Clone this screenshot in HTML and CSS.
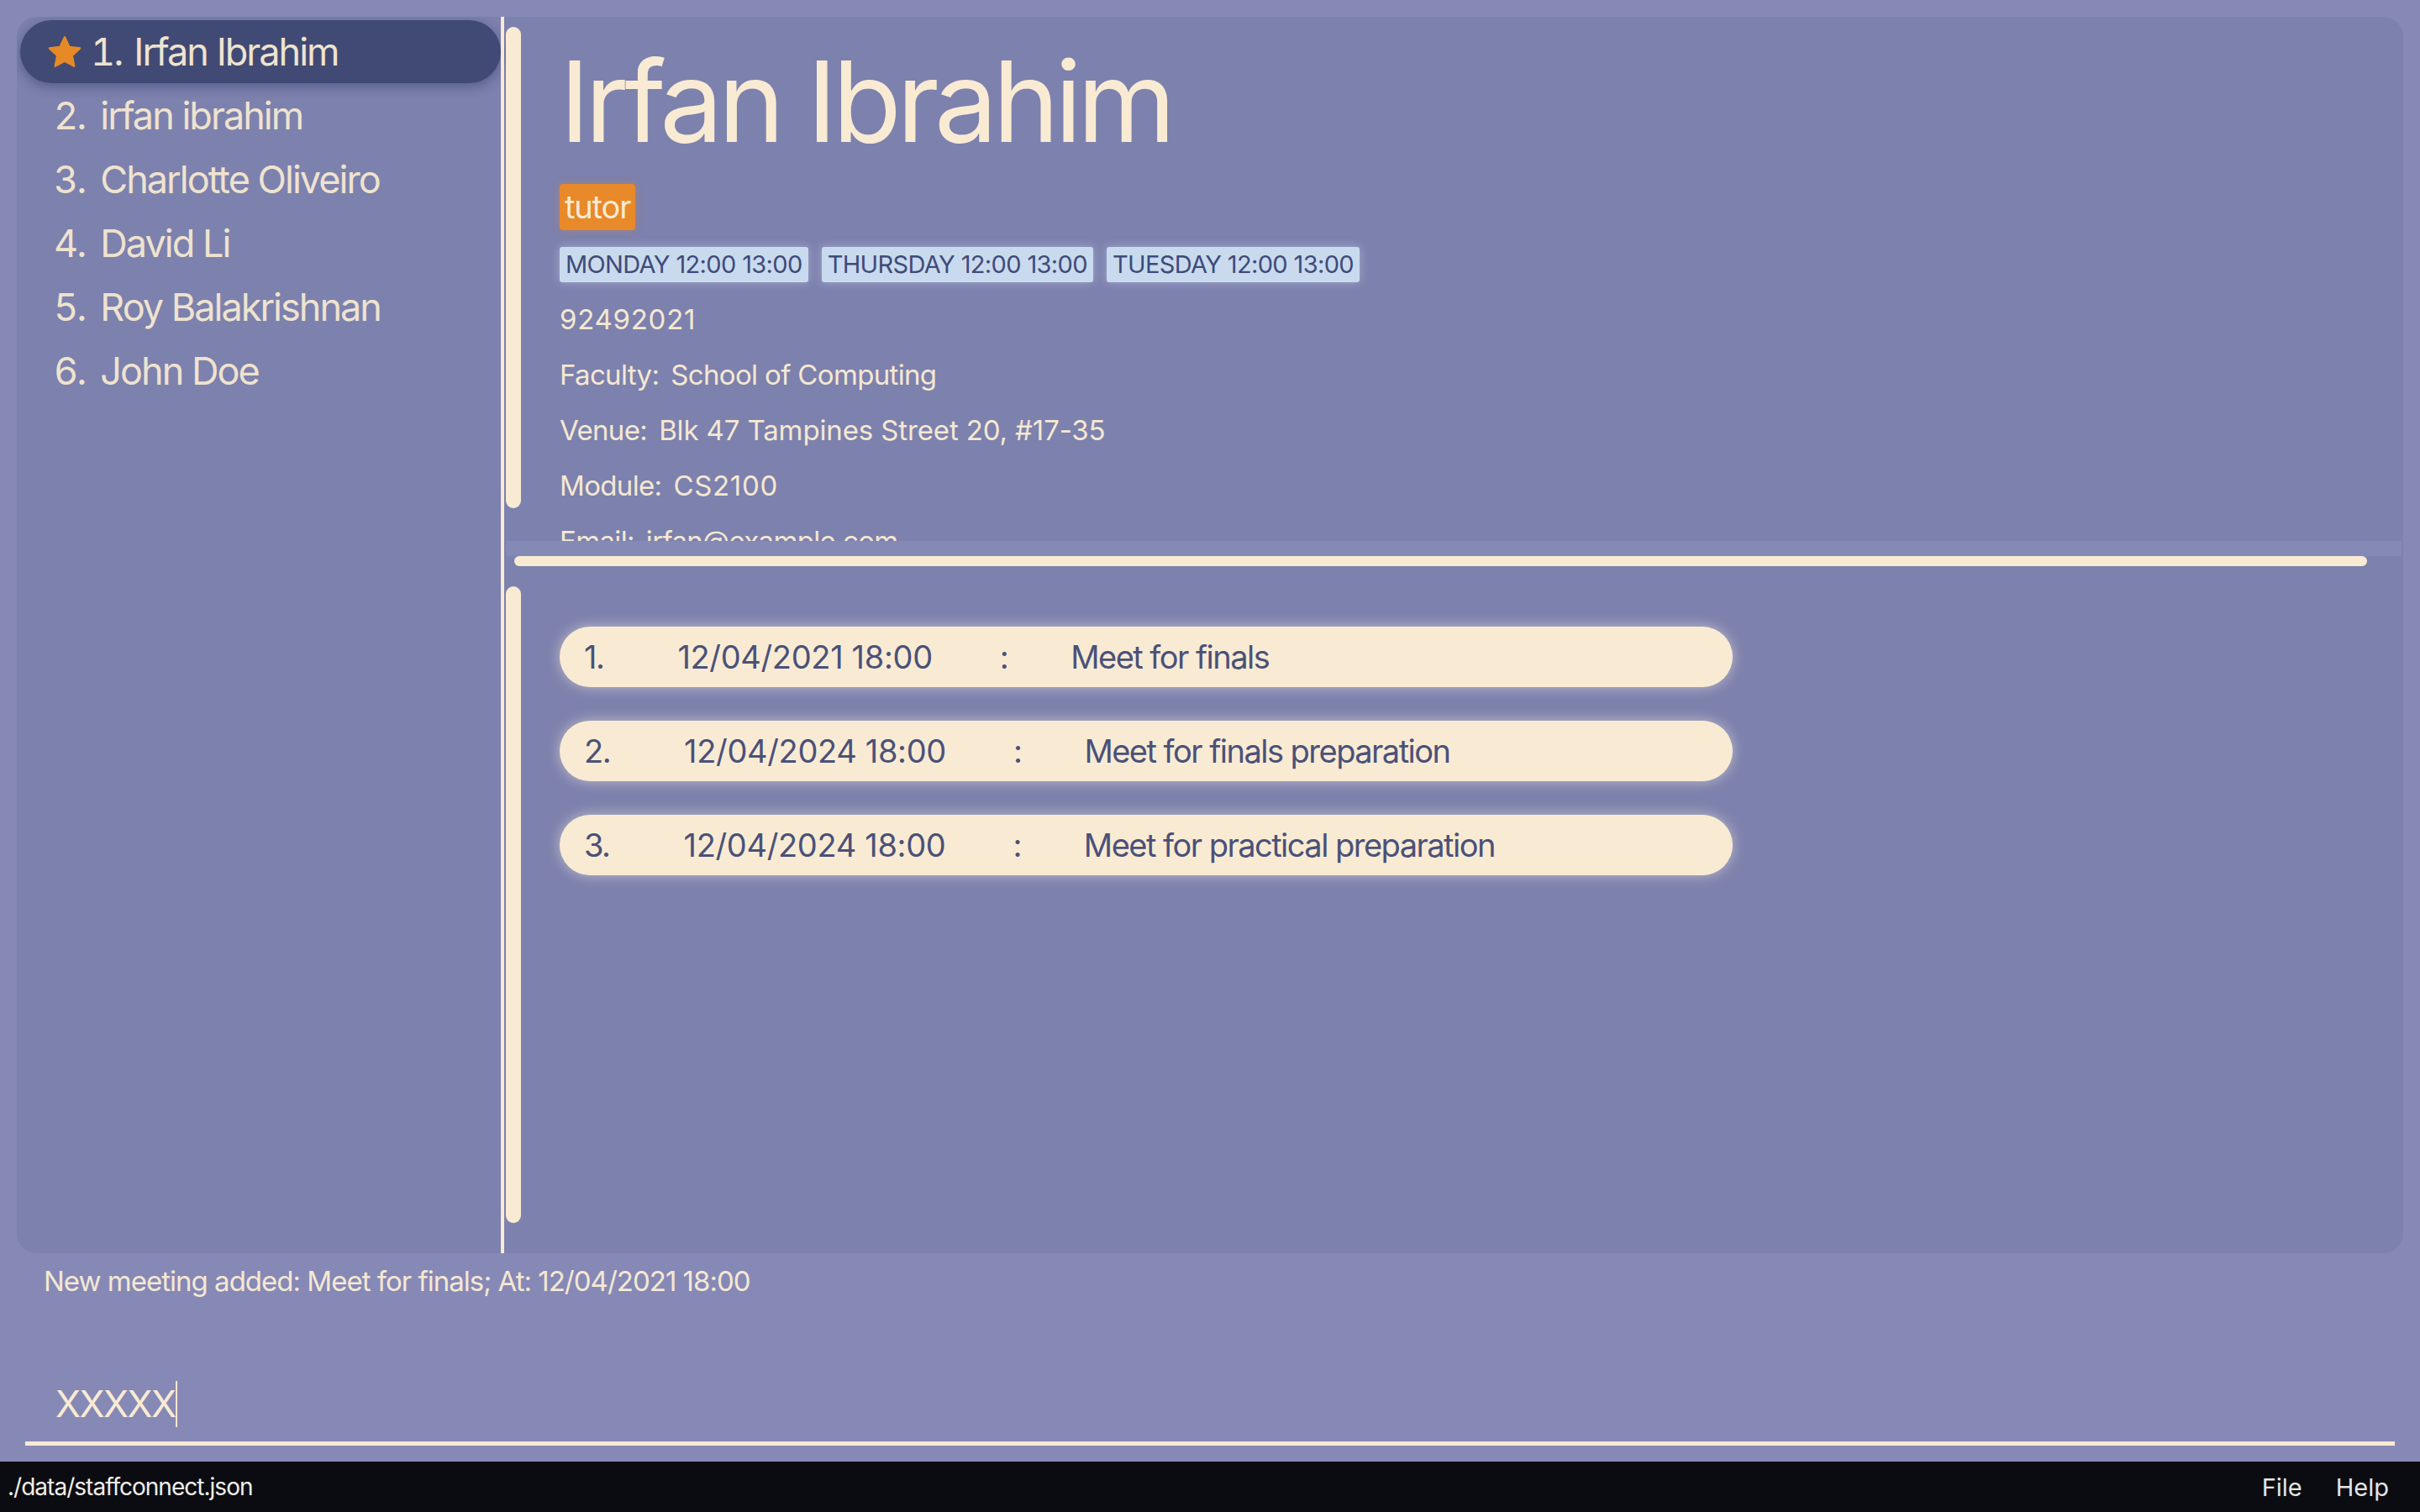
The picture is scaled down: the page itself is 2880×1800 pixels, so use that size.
FILE: index.html
```html
<!DOCTYPE html>
<html>
<head>
<meta charset="utf-8">
<link rel="stylesheet" href="styles.css">
</head>
<body>
<div class="app">
  <div class="main">
    <div class="list">
      <div class="row selected">
        <svg class="star" viewBox="0 0 24 24"><polygon points="12,1.3 15.29,8.27 22.94,9.25 17.33,14.53 18.76,22.1 12,18.4 5.24,22.1 6.67,14.53 1.06,9.25 8.71,8.27" fill="#e58a27" stroke="#e58a27" stroke-width="1.4" stroke-linejoin="round"/></svg>
        <span class="num">1.</span><span class="name">Irfan Ibrahim</span>
      </div>
      <div class="row"><span class="num">2.</span><span class="name">irfan ibrahim</span></div>
      <div class="row"><span class="num">3.</span><span class="name">Charlotte Oliveiro</span></div>
      <div class="row"><span class="num">4.</span><span class="name">David Li</span></div>
      <div class="row"><span class="num">5.</span><span class="name">Roy Balakrishnan</span></div>
      <div class="row"><span class="num">6.</span><span class="name">John Doe</span></div>
    </div>
    <div class="divider"></div>
    <div class="right">
      <div class="detail">
        <div class="vtrack"><div class="vthumb detail-thumb"></div></div>
        <div class="detail-content">
          <div class="person-name">Irfan Ibrahim</div>
          <div class="tags"><span class="tag">tutor</span></div>
          <div class="avails">
            <span class="avail">MONDAY 12:00 13:00</span>
            <span class="avail">THURSDAY 12:00 13:00</span>
            <span class="avail">TUESDAY 12:00 13:00</span>
          </div>
          <div class="field"><span class="phone">92492021</span></div>
          <div class="field"><span class="label">Faculty:</span>School of Computing</div>
          <div class="field"><span class="label">Venue:</span><span class="venue">Blk 47 Tampines Street 20, #17-35</span></div>
          <div class="field"><span class="label">Module:</span><span class="code">CS2100</span></div>
          <div class="field"><span class="label">Email:</span>irfan@example.com</div>
        </div>
      </div>
      <div class="hband"></div>
      <div class="hscroll"><div class="hthumb"></div></div>
      <div class="meetings">
        <div class="vtrack"><div class="vthumb meet-thumb"></div></div>
        <div class="meeting-list">
          <div class="card"><span class="m-num">1.</span><span class="m-date">12/04/2021 18:00</span><span class="m-colon">:</span><span class="m-desc">Meet for finals</span></div>
          <div class="card"><span class="m-num">2.</span><span class="m-date">12/04/2024 18:00</span><span class="m-colon">:</span><span class="m-desc">Meet for finals preparation</span></div>
          <div class="card"><span class="m-num">3.</span><span class="m-date">12/04/2024 18:00</span><span class="m-colon">:</span><span class="m-desc">Meet for practical preparation</span></div>
        </div>
      </div>
    </div>
  </div>
  <div class="result">New meeting added: Meet for finals; At: 12/04/2021 18:00</div>
  <div class="command"><span class="cmd-text">XXXXX</span><span class="caret"></span></div>
  <div class="status">
    <span class="path">./data/staffconnect.json</span>
    <span class="menu"><span>File</span><span>Help</span></span>
  </div>
</div>
</body>
</html>
```
FILE: styles.css
```css
* { box-sizing: border-box; }
html, body { margin: 0; padding: 0; }
body {
  width: 2880px;
  height: 1800px;
  background: #8689b6;
  font-family: Inter, "Noto Sans", sans-serif;
  color: #f3e6d0;
  overflow: hidden;
}
.app {
  display: flex;
  flex-direction: column;
  height: 1800px;
}
.main {
  margin: 20px 20px 0 20px;
  height: 1472px;
  background: #7d81ad;
  border-radius: 24px;
  display: flex;
  overflow: hidden;
}
.list {
  width: 576px;
  padding: 4px 0 0 4px;
  display: flex;
  flex-direction: column;
  gap: 1px;
}
.row {
  height: 75px;
  display: flex;
  align-items: center;
  padding-left: 40px;
  font-size: 45px;
  line-height: 75px;
  letter-spacing: -0.044em;
  color: #efe3cf;
}
.row.selected {
  background: #414a74;
  border-radius: 38px;
  padding-left: 33px;
  box-shadow: 0 4px 14px rgba(40, 45, 90, 0.45);
}
.star {
  width: 40px;
  height: 40px;
  margin-right: 11px;
  overflow: visible;
}
.num {
  margin-right: 18px;
  font-variant-numeric: tabular-nums;
}
.row.selected .num { margin-right: 14px; }
.divider {
  width: 4px;
  background: #f9ebd3;
}
.right {
  flex: 1;
  display: flex;
  flex-direction: column;
}
.vtrack {
  width: 24px;
  flex: none;
  padding-left: 2px;
}
.vthumb {
  width: 18px;
  background: #f9ebd3;
  border-radius: 9px;
}
.detail {
  height: 624px;
  display: flex;
  overflow: hidden;
}
.detail-thumb {
  margin-top: 12px;
  height: 573px;
}
.detail-content {
  padding: 19px 0 0 42px;
  color: #f5e8d2;
}
.person-name {
  font-size: 134px;
  line-height: normal;
  letter-spacing: -0.042em;
  color: #f9ebd3;
  margin-left: 0;
}
.tags {
  margin-top: 18px;
  display: flex;
}
.tag {
  background: #e8892a;
  color: #f9ebd3;
  font-size: 38px;
  line-height: 47px;
  padding: 4px 6px 4px 6px;
  border-radius: 4px;
  letter-spacing: -0.03em;
  box-shadow: 0 0 10px rgba(232, 137, 42, 0.35);
}
.avails {
  margin-top: 20px;
  display: flex;
  gap: 16px;
}
.avail {
  background: #c9daef;
  color: #3f4b78;
  font-size: 29px;
  line-height: 36px;
  padding: 3px 7px;
  border-radius: 3px;
  letter-spacing: -0.022em;
  box-shadow: 0 0 12px rgba(210, 225, 245, 0.45);
}
.avails + .field { margin-top: 11px; }
.field {
  font-size: 33px;
  line-height: 66px;
  letter-spacing: -0.02em;
  white-space: nowrap;
}
.phone { letter-spacing: 0.022em; }
.venue { letter-spacing: -0.004em; }
.code { letter-spacing: 0.02em; }
.label { margin-right: 14px; }
.hband {
  height: 18px;
  margin-left: 2px;
  margin-right: 2px;
  background: #8589b6;
}
.hscroll {
  height: 12px;
  padding-left: 12px;
}
.hthumb {
  width: 2205px;
  height: 12px;
  background: #f9ebd3;
  border-radius: 6px;
}
.meetings {
  flex: 1;
  display: flex;
}
.meet-thumb {
  margin-top: 24px;
  height: 758px;
}
.meeting-list {
  padding: 72px 0 0 42px;
  display: flex;
  flex-direction: column;
  gap: 40px;
}
.card {
  width: 1396px;
  height: 72px;
  border-radius: 36px;
  background: #f9ebd3;
  color: #4a5179;
  display: flex;
  align-items: center;
  padding-left: 29px;
  font-size: 38px;
  letter-spacing: -0.04em;
  box-shadow: 0 0 16px rgba(250, 240, 225, 0.55);
}
.m-num { margin-right: 88px; }
.m-date { margin-right: 80px; letter-spacing: -0.009em; }
.m-colon { margin-right: 75px; }
.result {
  height: 152px;
  padding: 13px 0 0 52px;
  font-size: 33px;
  line-height: 40px;
  letter-spacing: -0.03em;
  color: #f5e8d2;
}
.command {
  margin: 0 30px;
  padding: 0 0 17px 36px;
  border-bottom: 5px solid #f9ebd3;
  display: flex;
  align-items: center;
  font-size: 44px;
  line-height: 53px;
  letter-spacing: -0.035em;
  color: #f9ebd3;
}
.caret {
  width: 2px;
  height: 55px;
  background: #f3e6d0;
  margin-left: 1px;
}
.status {
  margin-top: auto;
  height: 60px;
  background: #0b0c11;
  display: flex;
  align-items: center;
  justify-content: space-between;
  padding: 0 37px 0 9px;
  font-size: 28px;
  color: #f2efe8;
}
.path { letter-spacing: -0.035em; }
.menu {
  display: flex;
  gap: 40px;
  color: #e4e4e4;
  font-size: 29px;
}
```
